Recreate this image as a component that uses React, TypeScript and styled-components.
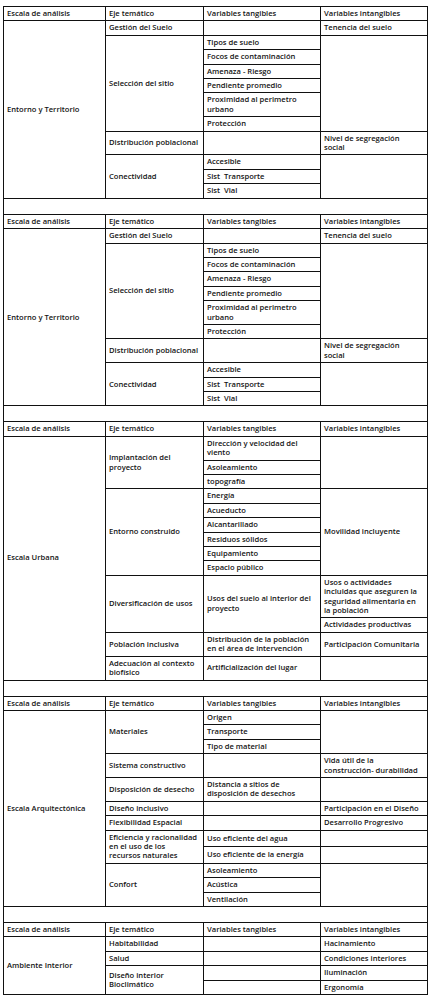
import React from "react";
import styled, { createGlobalStyle } from "styled-components";

type Cell = { text?: string; span?: number };
type Row = Cell[];

const columns = [102, 98, 117, 107];

const header = [
  "Escala de análisis",
  "Eje temático",
  "Variables tangibles",
  "Variables intangibles",
];

const entorno: Row[] = [
  [
    { text: "Entorno y Territorio", span: 11 },
    { text: "Gestión del Suelo" },
    {},
    { text: "Tenencia del suelo" },
  ],
  [{ text: "Selección del sitio", span: 6 }, { text: "Tipos de suelo" }, { span: 6 }],
  [{ text: "Focos de contaminación" }],
  [{ text: "Amenaza - Riesgo" }],
  [{ text: "Pendiente promedio" }],
  [{ text: "Proximidad al perimetro urbano" }],
  [{ text: "Protección" }],
  [{ text: "Distribución poblacional" }, {}, { text: "Nivel de segregación social" }],
  [{ text: "Conectividad", span: 3 }, { text: "Accesible" }, { span: 3 }],
  [{ text: "Sist\u00a0 Transporte" }],
  [{ text: "Sist\u00a0 Vial" }],
];

const urbana: Row[] = [
  [
    { text: "Escala Urbana", span: 13 },
    { text: "Implantación del proyecto", span: 3 },
    { text: "Dirección y velocidad del viento" },
    { span: 3 },
  ],
  [{ text: "Asoleamiento" }],
  [{ text: "topografía" }],
  [
    { text: "Entorno construido", span: 6 },
    { text: "Energía" },
    { text: "Movilidad incluyente", span: 6 },
  ],
  [{ text: "Acueducto" }],
  [{ text: "Alcantarillado" }],
  [{ text: "Residuos sólidos" }],
  [{ text: "Equipamiento" }],
  [{ text: "Espacio público" }],
  [
    { text: "Diversificación de usos", span: 2 },
    { text: "Usos del suelo al interior del proyecto", span: 2 },
    {
      text: "Usos o actividades\nincluidas que aseguren la\nseguridad alimentaria en\nla población",
    },
  ],
  [{ text: "Actividades productivas" }],
  [
    { text: "Población inclusiva" },
    { text: "Distribución de la población en el área de intervención" },
    { text: "Participación Comunitaria" },
  ],
  [{ text: "Adecuación al contexto biofísico" }, { text: "Artificialización del lugar" }, {}],
];

const arquitectonica: Row[] = [
  [
    { text: "Escala Arquitectónica", span: 12 },
    { text: "Materiales", span: 3 },
    { text: "Origen" },
    { span: 3 },
  ],
  [{ text: "Transporte" }],
  [{ text: "Tipo de material" }],
  [{ text: "Sistema constructivo" }, {}, { text: "Vida útil de la construcción- durabilidad" }],
  [{ text: "Disposición de desecho" }, { text: "Distancia a sitios de disposición de desechos" }, {}],
  [{ text: "Diseño inclusivo" }, {}, { text: "Participación en el Diseño" }],
  [{ text: "Flexibilidad Espacial" }, {}, { text: "Desarrollo Progresivo" }],
  [
    { text: "Eficiencia y racionalidad\nen el uso de los\nrecursos naturales", span: 2 },
    { text: "Uso eficiente del agua" },
    {},
  ],
  [{ text: "Uso eficiente de la energía" }, {}],
  [{ text: "Confort", span: 3 }, { text: "Asoleamiento" }, { span: 3 }],
  [{ text: "Acústica" }],
  [{ text: "Ventilación" }],
];

const interior: Row[] = [
  [{ text: "Ambiente Interior", span: 4 }, { text: "Habitabilidad" }, {}, { text: "Hacinamiento" }],
  [{ text: "Salud" }, {}, { text: "Condiciones interiores" }],
  [{ text: "Diseño interior Bioclimático", span: 2 }, {}, { text: "Iluminación" }],
  [{}, { text: "Ergonomía" }],
];

const sections = [entorno, entorno, urbana, arquitectonica, interior];

const GlobalStyle = createGlobalStyle`
  html, body {
    margin: 0;
    background: #ffffff;
  }
`;

const Page = styled.div`
  padding: 6px 0 10px 3px;
`;

const Sheet = styled.table`
  width: 425px;
  table-layout: fixed;
  border-collapse: separate;
  border-spacing: 0;
  border-top: 1px solid #111;
  border-left: 1px solid #111;
  font-family: "Open Sans", "Liberation Sans", sans-serif;
  font-size: 7.6px;
  font-weight: 600;
  color: #141414;
`;

const Col = styled.col<{ $w: number }>`
  width: ${({ $w }) => `${$w}px`};
`;

const Cell = styled.td`
  padding: 2px 2px 2px 3px;
  line-height: 9.4px;
  vertical-align: middle;
  text-align: left;
  white-space: pre-line;
  border-right: 1px solid #111;
  border-bottom: 1px solid #111;
  overflow-wrap: break-word;

  &:last-child {
    padding-right: 6px;
  }
`;

const Gap = styled.td`
  height: 15px;
  padding: 0;
  border-right: 1px solid #111;
  border-bottom: 1px solid #111;
`;

const App = () => {
  const rows: React.ReactNode[] = [];

  sections.forEach((section, s) => {
    if (s > 0)
      rows.push(
        <tr key={`gap-${s}`}>
          <Gap colSpan={4} />
        </tr>
      );

    rows.push(
      <tr key={`head-${s}`}>
        {header.map((h) => (
          <Cell key={h}>{h}</Cell>
        ))}
      </tr>
    );

    section.forEach((row, r) => {
      rows.push(
        <tr key={`${s}-${r}`}>
          {row.map((cell, c) => (
            <Cell key={c} rowSpan={cell.span}>
              {cell.text}
            </Cell>
          ))}
        </tr>
      );
    });
  });

  return (
    <>
      <GlobalStyle />
      <Page>
        <Sheet>
          <colgroup>
            {columns.map((w, i) => (
              <Col key={i} $w={w} />
            ))}
          </colgroup>
          <tbody>{rows}</tbody>
        </Sheet>
      </Page>
    </>
  );
};

export default App;
